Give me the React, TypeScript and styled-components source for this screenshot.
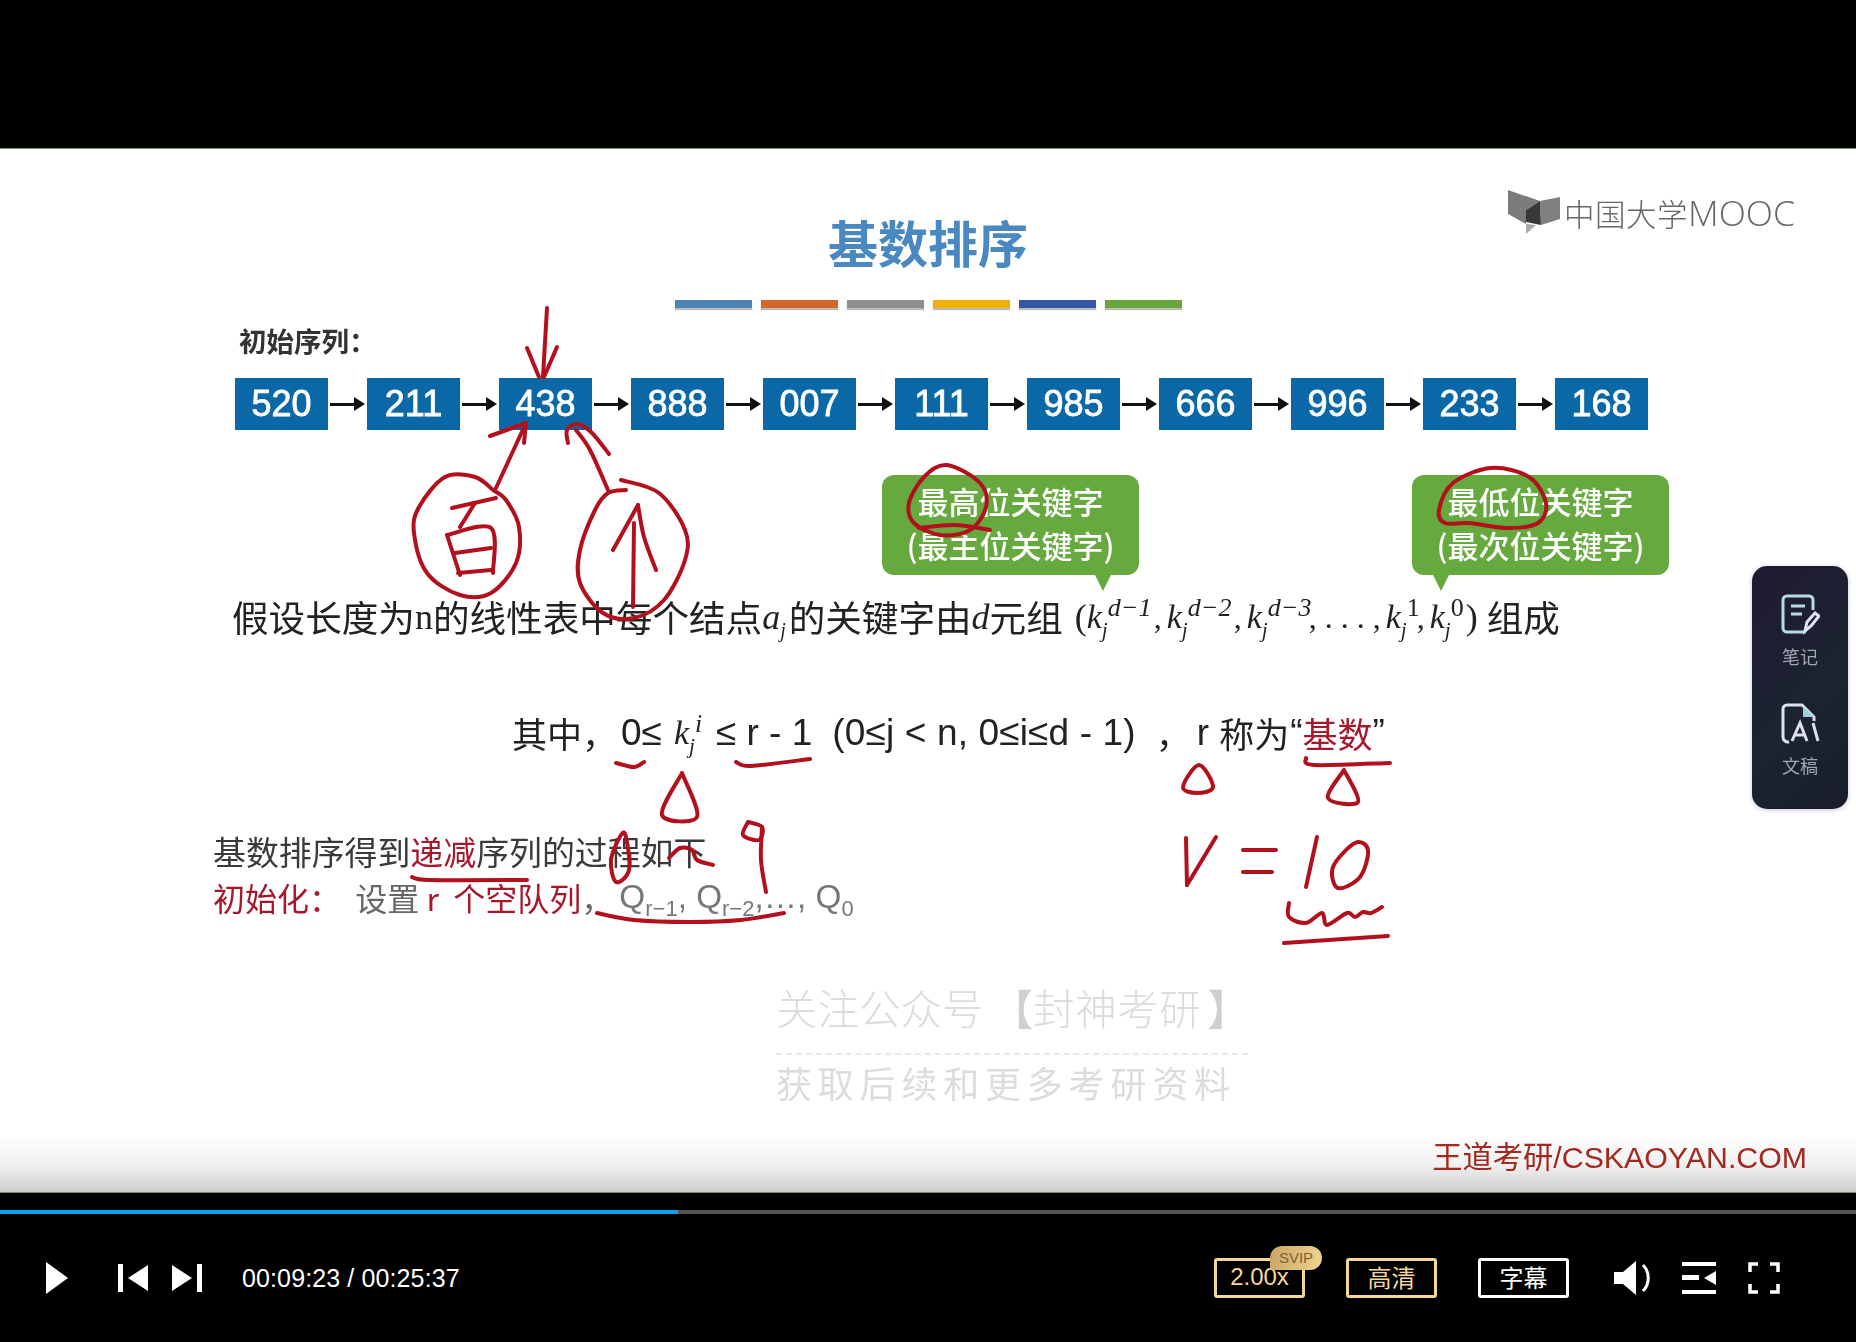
import styled, { createGlobalStyle } from 'styled-components'

const sans = `"Liberation Sans", "Noto Sans CJK SC", sans-serif`
const cjk = `"Noto Sans CJK SC", "Liberation Sans", sans-serif`
const serif = `"Liberation Serif", "Noto Sans CJK SC", serif`
const red = '#a8182c'

const GlobalStyle = createGlobalStyle`
    html, body {
        margin: 0;
        background: #000;
        overflow: hidden;
    }
`

const Page = styled.div`
    width: 1856px;
    height: 1342px;
    display: flex;
    flex-direction: column;
    background: #000;
    font-family: ${sans};
`

const TopBar = styled.div`
    height: 148px;
    flex: none;
`

const Slide = styled.section`
    position: relative;
    height: 1043px;
    flex: none;
    overflow: hidden;
    border-top: 1px solid #6f9a68;
    border-bottom: 1px solid #7f8c74;
    background: linear-gradient(#fff 0, #fff 985px, #f1f1f1 1015px, #cfcfcf 1043px);
    filter: blur(0.5px);
`

const Header = styled.header`
    display: grid;
    grid-template-columns: 1fr auto 1fr;
    height: 151px;
`

const Title = styled.h1`
    grid-column: 2;
    margin: 62px 0 0;
    height: 60px;
    font: 700 50px/60px ${cjk};
    color: #4a88c2;
`

const Logo = styled.div`
    grid-column: 3;
    justify-self: end;
    display: flex;
    align-items: center;
    gap: 4px;
    height: 45px;
    margin: 41px 61px 0 0;
    color: #666;
    font: 300 30.5px/45px ${cjk};
    letter-spacing: 0.5px;
`

const LogoLatin = styled.span`
    font: 300 35.5px/45px "Open Sans", sans-serif;
    letter-spacing: 0;
`

const Stripes = styled.div`
    display: flex;
    justify-content: center;
    gap: 9px;
    height: 10px;
`

const Stripe = styled.div<{ $color: string }>`
    width: 77px;
    height: 8px;
    background: ${({ $color }) => $color};
    box-shadow: 0 2px 1px #bbb;
`

const SeqLabel = styled.div`
    margin: 15px 0 0 239px;
    font: 700 27.5px/30px ${cjk};
    color: #333;
`

const Sequence = styled.div`
    display: flex;
    margin: 23px 0 0 235px;
    height: 52px;
`

const Node = styled.div`
    width: 93px;
    height: 52px;
    display: flex;
    align-items: center;
    justify-content: center;
    background: #0a68a6;
    color: #fff;
    font: 400 36px/52px ${sans};
    -webkit-text-stroke: 0.8px #fff;
`

const Link = styled.div`
    width: 39px;
    display: flex;
    align-items: center;
    justify-content: center;

    &::before {
        content: '';
        width: 24px;
        height: 3px;
        background: #111;
    }

    &::after {
        content: '';
        border-left: 11px solid #111;
        border-top: 7px solid transparent;
        border-bottom: 7px solid transparent;
    }
`

const Callouts = styled.div`
    display: flex;
    gap: 273px;
    margin: 45px 0 0 882px;
`

const Callout = styled.div<{ $tail: number }>`
    position: relative;
    width: 257px;
    height: 100px;
    padding-top: 4px;
    box-sizing: border-box;
    border-radius: 12px;
    background: #66a93f;
    color: #fff;
    text-align: center;
    font: 500 31px/44px ${cjk};

    &::after {
        content: '';
        position: absolute;
        top: 100%;
        left: ${({ $tail }) => $tail}px;
        border-top: 16px solid #66a93f;
        border-left: 8px solid transparent;
        border-right: 8px solid transparent;
    }
`

const DefinitionLine = styled.div`
    display: flex;
    align-items: center;
    height: 50px;
    margin: 17px 0 0 232px;
    color: #222;
    font: 400 36.6px/50px ${cjk};
    white-space: pre;
`

const Serif = styled.span`
    font-family: ${serif};
    font-size: 36px;
`

const Italic = styled(Serif)`
    font-style: italic;
`

const OpenParen = styled(Serif)`
    margin-left: 12px;
`

const CloseParen = styled(Serif)`
    margin-right: 9px;
`

const IndexedA = styled(Italic)`
    margin-right: 3px;

    sub {
        font-size: 20px;
        line-height: 0;
    }
`

const KTerm = styled.span<{ $width: number; $left?: number }>`
    display: inline-flex;
    align-items: center;
    width: ${({ $width }) => $width}px;
    margin-left: ${({ $left }) => $left || 0}px;
    font: italic 34px/50px ${serif};
`

const Scripts = styled.span`
    display: inline-flex;
    flex-direction: column;
    margin-left: 6px;
    font: italic 26px/24px ${serif};
    white-space: nowrap;

    small {
        font-size: 21px;
        line-height: 16px;
        margin: 2px 0 0 -6px;
    }
`

const Upright = styled.span`
    font-style: normal;
`

const Comma = styled.span`
    font: 400 32px/50px ${serif};
    margin: 0 5px 0 0;
`

const RangeLine = styled.div`
    display: flex;
    align-items: center;
    height: 50px;
    margin: 66px 0 0 512px;
    color: #222;
    font: 400 37px/50px ${sans};
    white-space: pre;
`

const CjkRun = styled.span<{ $left?: number }>`
    margin-left: ${({ $left }) => $left || 0}px;
    font: 400 35px/50px ${cjk};
`

const LatinRun = styled.span<{ $left?: number; $spread?: number }>`
    margin-left: ${({ $left }) => $left || 0}px;
    letter-spacing: ${({ $spread }) => $spread || 0}px;
`

const RedRun = styled.span`
    color: ${red};
`

const ProcessTitle = styled.div`
    height: 40px;
    margin: 73px 0 0 213px;
    color: #3a3a3a;
    font: 400 32.9px/40px ${cjk};
`

const ProcessInit = styled.div`
    display: flex;
    align-items: center;
    height: 40px;
    margin: 6px 0 0 213px;
    color: #666;
    font: 400 32px/40px ${cjk};
    white-space: pre;
`

const QueueName = styled.span`
    margin-left: 6px;
    color: #777;
    font: 400 33.3px/40px ${sans};

    sub {
        font-size: 22px;
        line-height: 0;
    }
`

const Watermark = styled.div`
    width: 472px;
    margin: 65px 0 0 776px;
    color: #dcdcdc;
`

const WatermarkTitle = styled.div`
    height: 50px;
    font: 300 41.5px/50px ${cjk};
    white-space: nowrap;
`

const WatermarkBrand = styled.span`
    letter-spacing: 0.6px;
`

const WatermarkBracket = styled.span<{ $left?: number }>`
    margin-left: ${({ $left }) => $left || 0}px;
    color: #cfcfcf;
    font-weight: 700;
`

const WatermarkRule = styled.div`
    margin-top: 21px;
    border-top: 2px dashed #e8e8e8;
`

const WatermarkNote = styled.div`
    height: 44px;
    margin-top: 5px;
    font: 400 36px/44px ${cjk};
    letter-spacing: 5.8px;
    white-space: nowrap;
`

const Credit = styled.div`
    height: 36px;
    margin: 36px 49px 0 0;
    text-align: right;
    color: #a3281e;
    font: 400 30.3px/36px ${sans};
`

const SidePanel = styled.aside`
    position: absolute;
    top: 417px;
    left: 1752px;
    width: 96px;
    height: 243px;
    display: flex;
    flex-direction: column;
    align-items: center;
    gap: 36px;
    padding-top: 28px;
    box-sizing: border-box;
    border-radius: 15px;
    background: linear-gradient(135deg, #201a34, #1b2430 60%, #191c2c);
    box-shadow: 0 1px 5px rgba(110, 120, 160, 0.4);
`

const PanelItem = styled.div`
    display: flex;
    flex-direction: column;
    align-items: center;
    gap: 9px;
    height: 73px;
    color: #a2a6b4;
    font: 400 18px/22px ${cjk};
`

const Ink = styled.svg`
    position: absolute;
    top: 0;
    left: 0;
    pointer-events: none;

    path {
        fill: none;
        stroke: #b2101c;
        stroke-width: 4;
        stroke-linecap: round;
        stroke-linejoin: round;
    }
`

const Controls = styled.footer`
    flex: 1;
    padding-top: 17px;
`

const Track = styled.div`
    height: 4px;
    background: #555;
`

const TrackFill = styled.div`
    height: 100%;
    background: #0aa3f2;
`

const ControlRow = styled.div`
    display: flex;
    align-items: center;
    height: 128px;
    padding: 0 76px 0 46px;
    color: #fff;
`

const IconButton = styled.svg<{ $gap?: number }>`
    flex: none;
    margin-left: ${({ $gap }) => $gap || 0}px;
    fill: #fff;
`

const TimeLabel = styled.div`
    margin-left: 40px;
    font: 400 25px/30px ${sans};
    letter-spacing: 0.12px;
    white-space: pre;
`

const Spacer = styled.div`
    flex: 1;
`

const Badge = styled.div<{ $plain?: boolean }>`
    position: relative;
    width: 91px;
    height: 40px;
    margin-right: 41px;
    padding-bottom: 3px;
    box-sizing: border-box;
    display: flex;
    align-items: center;
    justify-content: center;
    border: 3px solid ${({ $plain }) => ($plain ? '#fff' : '#f6d79a')};
    border-radius: 3px;
    color: ${({ $plain }) => ($plain ? '#fff' : '#f6d79a')};
    font: 400 24px/30px ${cjk};
`

const SpeedText = styled.span`
    font-family: ${sans};
`

const Tag = styled.span`
    position: absolute;
    top: -15px;
    right: -20px;
    width: 52px;
    height: 24px;
    border-radius: 12px 12px 12px 2px;
    background: linear-gradient(100deg, #c9a565, #efd48f);
    color: #7d6136;
    text-align: center;
    font: 400 15px/24px ${sans};
`

type Stroke = { pts: number[][]; closed?: boolean }

// catmull-rom through the sampled pen points
const smooth = ({ pts, closed }: Stroke) => {
    const n = pts.length
    const at = (i: number) => (closed ? pts[(i + n) % n] : pts[Math.max(0, Math.min(n - 1, i))])
    let d = `M${pts[0][0]} ${pts[0][1]}`
    for (let i = 0; i < (closed ? n : n - 1); i++) {
        const [p0, p1, p2, p3] = [at(i - 1), at(i), at(i + 1), at(i + 2)]
        const c1 = [p1[0] + (p2[0] - p0[0]) / 6, p1[1] + (p2[1] - p0[1]) / 6]
        const c2 = [p2[0] - (p3[0] - p1[0]) / 6, p2[1] - (p3[1] - p1[1]) / 6]
        d += `C${c1[0]} ${c1[1]} ${c2[0]} ${c2[1]} ${p2[0]} ${p2[1]}`
    }
    return d
}

const strokes: Stroke[] = [
    // arrow down to 438
    { pts: [[547, 308], [543, 377]] },
    { pts: [[527, 348], [539, 377]] },
    { pts: [[557, 347], [544, 377]] },
    // arrow from 百
    { pts: [[496, 488], [526, 423]] },
    { pts: [[490, 436], [526, 423]] },
    { pts: [[524, 443], [526, 423]] },
    // arrow from 个
    { pts: [[608, 490], [590, 450], [576, 430]] },
    { pts: [[568, 443], [567, 430], [578, 424], [592, 433], [609, 454]] },
    // 百
    { pts: [[493, 490], [475, 477], [445, 477], [419, 507], [414, 533], [427, 573], [460, 595], [491, 593], [516, 563], [519, 527], [506, 500], [493, 490]] },
    { pts: [[452, 508], [496, 498]] },
    { pts: [[475, 503], [460, 527]] },
    { pts: [[447, 535], [460, 575]] },
    { pts: [[447, 535], [491, 528], [493, 573]] },
    { pts: [[455, 553], [491, 548]] },
    { pts: [[458, 573], [491, 570]] },
    // 个
    { pts: [[621, 480], [659, 493], [685, 530], [685, 560], [664, 600], [634, 618], [603, 613], [580, 583], [580, 550], [595, 510], [608, 493], [626, 490]] },
    { pts: [[634, 523], [633, 607]] },
    { pts: [[638, 505], [613, 550]] },
    { pts: [[638, 505], [644, 537], [656, 570]] },
    // circles on the callouts
    { pts: [[947, 465], [980, 483], [986, 507], [970, 530], [940, 535], [914, 523], [909, 503], [924, 477]], closed: true },
    { pts: [[919, 528], [955, 525], [990, 530]] },
    { pts: [[1491, 468], [1529, 477], [1546, 503], [1538, 523], [1508, 528], [1469, 523], [1445, 523], [1439, 510], [1453, 483]], closed: true },
    // range line marks
    { pts: [[616, 763], [634, 767], [644, 762]] },
    { pts: [[736, 762], [751, 766], [810, 759]] },
    { pts: [[682, 773], [662, 815], [697, 817], [682, 773]] },
    { pts: [[1199, 765], [1183, 787], [1197, 793], [1213, 787]], closed: true },
    { pts: [[1306, 758], [1314, 765], [1390, 763]] },
    { pts: [[1344, 770], [1328, 798], [1358, 802], [1344, 770]] },
    // 0 ~ 9
    { pts: [[412, 877], [430, 880], [527, 880]] },
    { pts: [[621, 835], [611, 860], [616, 882], [629, 870], [626, 837]], closed: true },
    { pts: [[669, 858], [680, 848], [692, 850], [697, 860], [713, 865]] },
    { pts: [[748, 822], [743, 835], [759, 840], [762, 827], [748, 822]] },
    { pts: [[762, 827], [761, 860], [766, 892]] },
    { pts: [[597, 913], [634, 920], [690, 922], [741, 920], [784, 913]] },
    // r = 10
    { pts: [[1186, 838], [1187, 885]] },
    { pts: [[1187, 885], [1216, 837]] },
    { pts: [[1243, 850], [1276, 850]] },
    { pts: [[1243, 872], [1272, 872]] },
    { pts: [[1317, 837], [1306, 887]] },
    { pts: [[1355, 843], [1333, 867], [1338, 888], [1360, 877], [1368, 850]], closed: true },
    { pts: [[1289, 903], [1289, 917], [1306, 923], [1322, 913], [1327, 925], [1347, 913], [1355, 917], [1363, 912], [1371, 913], [1382, 907]] },
    { pts: [[1284, 943], [1388, 936]] },
]

const stripeColors = ['#4d84b8', '#d4672a', '#8f8f8f', '#eeb208', '#3356a4', '#6aa63c']
const sequence = ['520', '211', '438', '888', '007', '111', '985', '666', '996', '233', '168']

const BookMark = () => (
    <svg width="52" height="45" viewBox="0 0 52 45">
        <path d="M0 0L32 11L18 20V34L0 24Z" fill="#7c7c7c" />
        <path d="M18 34V44L28 35Z" fill="#a8a8a8" />
        <path d="M32 11L52 7V29L33 35Z" fill="#808080" />
        <path d="M32 11L18 20V32L33 35Z" fill="#383838" />
    </svg>
)

const NoteIcon = () => (
    <svg width="40" height="42" viewBox="0 0 40 42" fill="none" stroke="#b9dbe6" strokeWidth="3">
        <path d="M26 38H7a4 4 0 0 1-4-4V6a4 4 0 0 1 4-4h22a4 4 0 0 1 4 4v10" />
        <path d="M11 12h14M11 20h11" />
        <path d="M25 37l2-9 8-9 4 3-8 10z" stroke="#dfe4f2" />
    </svg>
)

const DraftIcon = () => (
    <svg width="40" height="42" viewBox="0 0 40 42" fill="none" stroke="#dfe0ee" strokeWidth="3">
        <path d="M9 39a5 5 0 0 1-6-5V6a4 4 0 0 1 4-4h15l12 12v4" />
        <path d="M23 3l11 11H23z" fill="#9fd0e2" stroke="none" />
        <path d="M12 38l8-18 7 18M15 32h10M33 20l5 18" />
    </svg>
)

const KScript = ({ sup, width, plain }: { sup: string; width: number; plain?: boolean }) => (
    <KTerm $width={width}>
        k
        <Scripts>
            {plain ? <Upright>{sup}</Upright> : <span>{sup}</span>}
            <small>j</small>
        </Scripts>
    </KTerm>
)

const App = () => {
    return (
        <Page>
            <GlobalStyle />
            <TopBar />
            <Slide>
                <Header>
                    <Title>基数排序</Title>
                    <Logo>
                        <BookMark />
                        <span>
                            中国大学<LogoLatin>MOOC</LogoLatin>
                        </span>
                    </Logo>
                </Header>
                <Stripes>
                    {stripeColors.map((color) => (
                        <Stripe key={color} $color={color} />
                    ))}
                </Stripes>
                <SeqLabel>初始序列：</SeqLabel>
                <Sequence>
                    {sequence.map((value, i) => (
                        <div key={value} style={{ display: 'contents' }}>
                            {i > 0 && <Link />}
                            <Node>{value}</Node>
                        </div>
                    ))}
                </Sequence>
                <Callouts>
                    <Callout $tail={213}>
                        最高位关键字
                        <br />
                        (最主位关键字)
                    </Callout>
                    <Callout $tail={21}>
                        最低位关键字
                        <br />
                        (最次位关键字)
                    </Callout>
                </Callouts>
                <DefinitionLine>
                    假设长度为<Serif>n</Serif>的线性表中每个结点
                    <IndexedA>a<sub>j</sub></IndexedA>的关键字由<Italic>d</Italic>元组
                    <OpenParen>(</OpenParen>
                    <KScript sup="d−1" width={67} />
                    <Comma>,</Comma>
                    <KScript sup="d−2" width={67} />
                    <Comma>,</Comma>
                    <KScript sup="d−3" width={62} />
                    <Comma>, . . . ,</Comma>
                    <KScript sup="1" width={31} plain />
                    <Comma>,</Comma>
                    <KScript sup="0" width={36} plain />
                    <CloseParen>)</CloseParen>组成
                </DefinitionLine>
                <RangeLine>
                    <CjkRun>其中，</CjkRun>
                    <LatinRun $left={4}>0≤</LatinRun>
                    <KTerm $width={42} $left={12}>
                        k
                        <Scripts>
                            <span>i</span>
                            <small>j</small>
                        </Scripts>
                    </KTerm>
                    <LatinRun>≤ r - 1</LatinRun>
                    <LatinRun $left={20} $spread={0.15}>(0≤j &lt; n, 0≤i≤d - 1)</LatinRun>
                    <CjkRun $left={20}>，</CjkRun>
                    <LatinRun $left={6}>r</LatinRun>
                    <CjkRun $left={10}>称为</CjkRun>
                    <LatinRun $left={1}>“</LatinRun>
                    <CjkRun>
                        <RedRun>基数</RedRun>
                    </CjkRun>
                    <LatinRun>”</LatinRun>
                </RangeLine>
                <ProcessTitle>
                    基数排序得到<RedRun>递减</RedRun>序列的过程如下
                </ProcessTitle>
                <ProcessInit>
                    <RedRun>初始化：</RedRun>
                    {'  设置 '}
                    <RedRun>r  个空队列</RedRun>
                    {'，'}
                    <QueueName>
                        Q<sub>r−1</sub>, Q<sub>r−2</sub>,…, Q<sub>0</sub>
                    </QueueName>
                </ProcessInit>
                <Watermark>
                    <WatermarkTitle>
                        关注公众号<WatermarkBracket $left={8}>【</WatermarkBracket>
                        <WatermarkBrand>封神考研</WatermarkBrand>
                        <WatermarkBracket $left={6}>】</WatermarkBracket>
                    </WatermarkTitle>
                    <WatermarkRule />
                    <WatermarkNote>获取后续和更多考研资料</WatermarkNote>
                </Watermark>
                <Credit>王道考研/CSKAOYAN.COM</Credit>
                <Ink width="1856" height="1043" viewBox="0 149 1856 1043">
                    {strokes.map((stroke, i) => (
                        <path key={i} d={smooth(stroke)} />
                    ))}
                </Ink>
                <SidePanel>
                    <PanelItem>
                        <NoteIcon />
                        笔记
                    </PanelItem>
                    <PanelItem>
                        <DraftIcon />
                        文稿
                    </PanelItem>
                </SidePanel>
            </Slide>
            <Controls>
                <Track>
                    <TrackFill style={{ width: `${(678 / 1856) * 100}%` }} />
                </Track>
                <ControlRow>
                    <IconButton width="22" height="32" viewBox="0 0 22 32">
                        <path d="M0 0L22 16L0 32Z" />
                    </IconButton>
                    <IconButton $gap={50} width="30" height="28" viewBox="0 0 30 28">
                        <path d="M0 0H5V28H0ZM30 1V27L10 14Z" />
                    </IconButton>
                    <IconButton $gap={24} width="30" height="28" viewBox="0 0 30 28">
                        <path d="M0 1V27L20 14ZM25 0H30V28H25Z" />
                    </IconButton>
                    <TimeLabel>00:09:23 / 00:25:37</TimeLabel>
                    <Spacer />
                    <Badge>
                        <SpeedText>2.00x</SpeedText>
                        <Tag>SVIP</Tag>
                    </Badge>
                    <Badge>高清</Badge>
                    <Badge $plain>字幕</Badge>
                    <IconButton $gap={4} width="40" height="34" viewBox="0 0 40 34">
                        <path d="M0 11H9L22 0V34L9 23H0Z" />
                        <path d="M29 4C36 11 36 23 29 30" fill="none" stroke="#fff" strokeWidth="3" />
                    </IconButton>
                    <IconButton $gap={28} width="34" height="32" viewBox="0 0 34 32">
                        <path d="M0 0H34V4H0ZM0 13H17V18H0ZM34 9V23L22 16ZM0 28H34V32H0Z" />
                    </IconButton>
                    <IconButton $gap={32} width="32" height="32" viewBox="0 0 32 32">
                        <path d="M2 10V2H10M22 2H30V10M30 22V30H22M10 30H2V22" fill="none" stroke="#fff" strokeWidth="3.5" />
                    </IconButton>
                </ControlRow>
            </Controls>
        </Page>
    )
}

export default App
